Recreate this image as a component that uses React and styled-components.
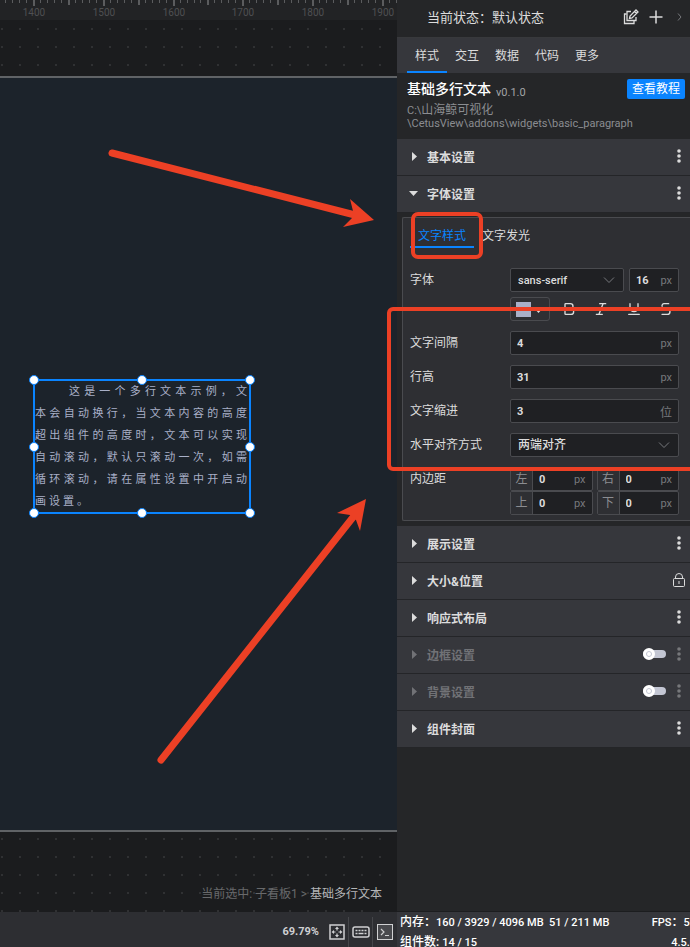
import React, { useState } from 'react';
import styled, { createGlobalStyle } from 'styled-components';
import { Bold, Italic, Underline, Strikethrough } from 'lucide-react';

const colors = {
  canvas: '#1b1c1e',
  board: '#1c232b',
  panel: '#252628',
  bar: '#36373c',
  group: '#2e2f33',
  field: '#1f2023',
  border: '#4a4b4f',
  text: '#dcdcdc',
  muted: '#8b8d91',
  accent: '#0a84ff',
  mark: '#ec4025',
};

const GlobalStyle = createGlobalStyle`
  *, *::before { box-sizing: border-box; }
  body {
    margin: 0;
    background: ${colors.panel};
    color: ${colors.text};
    font-family: Roboto, 'Noto Sans CJK SC', sans-serif;
    font-size: 12px;
  }
  button, input, select {
    margin: 0;
    padding: 0;
    border: 0;
    background: none;
    color: inherit;
    font: inherit;
  }
  svg { display: block; flex: none; }
`;

const Page = styled.div`
  position: relative;
  display: grid;
  grid-template-columns: minmax(0, 1fr) 293px;
  min-height: 100vh;
  overflow: hidden;
`;

/* Latin text and digits sit a size below the Chinese around them */
const Latin = styled.span`
  font-size: 11px;
  line-height: 1;
`;

/* ---- canvas side ---- */

const CanvasColumn = styled.main`
  display: flex;
  flex-direction: column;
  min-width: 0;
`;

const RulerBar = styled.div`
  height: 20px;
  overflow: hidden;
  background: #222325;
`;

const Stage = styled.div`
  flex: 1;
  display: flex;
  flex-direction: column;
  padding-top: 56px;
  background: conic-gradient(from 270deg at 2px 2px, #303133 90deg, transparent 0) 1px 8px / 18px 18px ${colors.canvas};
`;

const Board = styled.div`
  position: relative;
  flex: 1;
  border: solid #606366;
  border-width: 2px 0;
  background: ${colors.board};
`;

const Widget = styled.div`
  position: absolute;
  left: 34px;
  top: 302px;
  width: 216px;
  height: 133px;
  padding: 1px 0 0 1px;
`;

const Paragraph = styled.p`
  margin: 0;
  color: #a9b0c8;
  font-size: 11px;
  line-height: 22px;
  letter-spacing: 3px;
  text-indent: 34px;
  text-align: justify;
`;

const Selection = styled.div`
  position: absolute;
  inset: 0;
  box-shadow: 0 0 0 1px ${colors.accent}, inset 0 0 0 1px ${colors.accent};
`;

const Handle = styled.span`
  position: absolute;
  left: ${p => p.$x}%;
  top: ${p => p.$y}%;
  width: 10px;
  height: 10px;
  margin: -5px;
  border: 1px solid ${colors.accent};
  border-radius: 50%;
  background: #fff;
`;

const Crumbs = styled.div`
  display: flex;
  justify-content: flex-end;
  height: 80px;
  padding: 52px 15px 0 0;
  line-height: 20px;
  color: #68696b;
  white-space: pre;
`;

const Current = styled.span`color: #b4b5b7;`;

const ZoomBar = styled.div`
  display: flex;
  justify-content: flex-end;
  align-items: flex-end;
  height: 35px;
  padding-right: 1px;
  background: #2d2e32;
  font-size: 11px;
  font-weight: 700;
  color: #cfd0d2;
`;

const ZoomValue = styled.span`
  padding-right: 5px;
  line-height: 30px;
`;

const BarButton = styled.button`
  display: flex;
  align-items: center;
  justify-content: center;
  width: 24px;
  height: 30px;
  border-left: 1px solid ${p => p.$divided ? '#45464a' : 'transparent'};
`;

/* ---- settings side ---- */

const Panel = styled.aside`
  display: flex;
  flex-direction: column;
  min-width: 0;
  background: ${colors.panel};
`;

const StateBar = styled.header`
  display: flex;
  align-items: center;
  height: 38px;
  padding: 0 0 4px 30px;
  border-bottom: 1px solid #38393c;
  font-size: 13px;
`;

const StateName = styled.span`flex: 1;`;

const IconButton = styled.button`
  display: flex;
  align-items: center;
  justify-content: center;
  width: ${p => p.$width || 14}px;
  height: 24px;
  color: ${p => p.$dim ? '#77787b' : colors.text};
`;

const TabBar = styled.nav`
  display: flex;
  height: 35px;
  padding-left: 10px;
  background: ${colors.bar};
`;

const Tab = styled.button`
  padding: 0 8px;
  border-bottom: 2px solid ${p => p.$active ? colors.accent : 'transparent'};
`;

const Info = styled.section`
  height: 66px;
  padding: 5px 5px 0 10px;
`;

const InfoTop = styled.div`
  display: flex;
  align-items: center;
  height: 22px;
`;

const Title = styled.h1`
  margin: 0;
  font-size: 14px;
  font-weight: 500;
  line-height: 24px;
  color: #fff;
`;

const Version = styled.span`
  flex: 1;
  padding: 6px 0 0 5px;
  color: #a3a4a6;
  font-size: 11px;
`;

const Guide = styled.a`
  padding: 0 5px;
  border-radius: 2px;
  background: ${colors.accent};
  color: #fff;
  line-height: 20px;
  text-decoration: none;
`;

const Path = styled.p`
  margin: 4px 0 0;
  line-height: 13px;
  color: ${colors.muted};
`;

const SectionHead = styled.div`
  display: flex;
  align-items: center;
  height: 37px;
  padding: 0 4px 2px 0;
  border-bottom: 1px solid #242528;
  background: ${colors.bar};
  color: ${p => p.$dim ? '#717276' : colors.text};
`;

const SectionToggle = styled.button`
  flex: 1;
  display: flex;
  align-items: center;
  gap: 8px;
  height: 34px;
  padding-left: 12px;
  font-weight: 700;
  text-align: left;
`;

const Switch = styled.input`
  appearance: none;
  position: relative;
  width: 23px;
  height: 8px;
  margin-right: 6px;
  border-radius: 4px;
  background: #c3c6d3;

  &::before {
    content: '';
    position: absolute;
    left: ${p => p.checked ? 11 : 0}px;
    top: -2px;
    width: 12px;
    height: 12px;
    border: 3px solid #fff;
    border-radius: 50%;
    background: #fff;
    box-shadow: inset 0 0 0 1px #c3c6d3;
  }
`;

const SectionBody = styled.div`
  padding: 4px 0 5px 5px;
`;

const Group = styled.div`
  padding: 0 11px 5px 7px;
  border: 1px solid ${colors.border};
  border-right: 0;
  border-radius: 2px 0 0 2px;
  background: ${colors.group};
`;

const SubTabs = styled.div`
  display: flex;
  height: 30px;
  margin-bottom: 20px;
`;

const SubTab = styled(Tab)`
  padding: 4px 8px 0;
  color: ${p => p.$active ? colors.accent : colors.text};
`;

const Row = styled.div`
  display: grid;
  grid-template-columns: 100px minmax(0, 1fr);
  margin-bottom: ${p => p.$tight ? 5 : 10}px;

  &:last-child { margin-bottom: 0; }
`;

const RowLabel = styled.label`line-height: 24px;`;

const Controls = styled.div`
  display: flex;
  gap: 5px;
  grid-column: 2;
`;

const Box = styled.div`
  display: flex;
  align-items: center;
  flex: ${p => p.$narrow ? '0 0 50px' : '1'};
  min-width: 0;
  height: 24px;
  padding-right: 6px;
  border: 1px solid ${colors.border};
  border-radius: 2px;
  background: ${colors.field};
`;

const TextInput = styled.input`
  flex: 1;
  min-width: 0;
  padding: 1px 0 0 6px;
  font-size: 11px;
  font-weight: 700;
  outline: 0;
`;

const Unit = styled.span`
  color: #77797d;
  font-size: ${p => p.$latin ? 11 : 12}px;
`;

const Select = styled.select`
  flex: 1;
  min-width: 0;
  appearance: none;
  padding-left: 7px;
  font-size: ${p => p.$latin ? 11 : 12}px;
  font-weight: 500;
  outline: 0;
`;

const Swatch = styled.button`
  display: flex;
  align-items: center;
  gap: 3px;
  width: 40px;
  height: 24px;
  padding-left: 5px;
  border: 1px solid ${colors.border};
  border-radius: 3px;
`;

const SwatchColor = styled.span`
  width: 15px;
  height: 15px;
  background: #a9b0c8;
`;

const StyleButtons = styled.div`
  flex: 1;
  display: flex;
  justify-content: space-between;
  align-items: center;
  padding: 0 6px 0 7px;
`;

const SideGrid = styled.div`
  display: grid;
  grid-template-columns: 1fr 1fr;
  column-gap: 4px;
`;

const SideLabel = styled.label`
  width: 22px;
  height: 22px;
  border-right: 1px solid ${colors.border};
  background: ${colors.group};
  color: ${colors.muted};
  line-height: 22px;
  text-align: center;
`;

const Stats = styled.footer`
  display: grid;
  grid-template-columns: 1fr auto;
  grid-auto-rows: 20px;
  align-content: start;
  height: 36px;
  margin-top: auto;
  padding-left: 3px;
  border-top: 1px solid #1c1d1f;
  background: ${colors.bar};
  color: #fff;
  font-weight: 500;
  line-height: 20px;
  white-space: pre;
  overflow: hidden;
`;

const StatEnd = styled.span`
  margin-right: -6px;
  text-align: right;
`;

const Marks = styled.svg`
  position: absolute;
  left: 0;
  top: 0;
  pointer-events: none;
`;

const unit = 69.79;

const Ruler = () => {
  const ticks = [];
  for (let i = -4; i < 56; i++) {
    const big = i % 10 === 0;
    const mid = !big && i % 5 === 0;
    ticks.push(
      <rect key={i} x={Math.round(33 + i * unit / 10)} y="0"
            width={big || mid ? 2 : 1} height={big ? 6 : mid ? 5 : 3} />
    );
  }
  return (
    <RulerBar>
      <svg width="420" height="20" fill="#5b5c5e" fontSize="10" textAnchor="middle">
        {ticks}
        {[1400, 1500, 1600, 1700, 1800, 1900].map((n, i) =>
          <text key={n} x={Math.round(34 + i * unit)} y="16" fill="#4f5052">{n}</text>
        )}
      </svg>
    </RulerBar>
  );
};

const Caret = ({ open }) => (
  <svg width="10" height="10" fill="currentColor">
    {open ? <path d="M0 3h9l-4.500 5z" /> : <path d="M3 1l5 4.500L3 10z" />}
  </svg>
);

const Chevron = () => (
  <svg width="14" height="8" fill="none" stroke="#77797d">
    <path d="M1 1.500l5 5 5-5" />
  </svg>
);

const Dots = () => (
  <svg width="4" height="14" fill="currentColor">
    <circle cx="2" cy="2" r="1.800" />
    <circle cx="2" cy="7" r="1.800" />
    <circle cx="2" cy="12" r="1.800" />
  </svg>
);

const Lock = () => (
  <svg width="14" height="16" fill="none" stroke="currentColor">
    <rect x="1.500" y="6.500" width="11" height="8" rx="1" />
    <path d="M3.500 6.500V5a3.500 3.500 0 0 1 7 0v1.500M7 9v3" />
  </svg>
);

const Section = ({ title, dim, lock, toggle, children }) => {
  const [open, setOpen] = useState(!!children);
  const [on, setOn] = useState(false);

  return (
    <section>
      <SectionHead $dim={dim}>
        <SectionToggle aria-expanded={open} onClick={() => setOpen(!open)}>
          <Caret open={open} />
          {title}
        </SectionToggle>
        {toggle &&
          <Switch type="checkbox" role="switch" aria-label={title}
                  checked={on} onChange={() => setOn(!on)} />
        }
        <IconButton $dim={dim} aria-label={lock ? '锁定' : '菜单'}>
          {lock ? <Lock /> : <Dots />}
        </IconButton>
      </SectionHead>
      {open && children && <SectionBody>{children}</SectionBody>}
    </section>
  );
};

const NumberRow = ({ id, label, value, unit: suffix }) => (
  <Row>
    <RowLabel htmlFor={id}>{label}</RowLabel>
    <Box>
      <TextInput id={id} defaultValue={value} />
      <Unit $latin={suffix === 'px'}>{suffix}</Unit>
    </Box>
  </Row>
);

const SideField = ({ id, label }) => (
  <Box>
    <SideLabel htmlFor={id}>{label}</SideLabel>
    <TextInput id={id} defaultValue="0" />
    <Unit $latin>px</Unit>
  </Box>
);

const FontSettings = () => {
  const [tab, setTab] = useState('文字样式');

  return (
    <Group>
      <SubTabs>
        {['文字样式', '文字发光'].map(name =>
          <SubTab key={name} $active={tab === name} onClick={() => setTab(name)}>{name}</SubTab>
        )}
      </SubTabs>

      <Row $tight>
        <RowLabel htmlFor="font">字体</RowLabel>
        <Controls>
          <Box>
            <Select $latin id="font"><option>sans-serif</option><option>serif</option></Select>
            <Chevron />
          </Box>
          <Box $narrow>
            <TextInput aria-label="字号" defaultValue="16" />
            <Unit $latin>px</Unit>
          </Box>
        </Controls>
      </Row>

      <Row>
        <Controls>
          <Swatch aria-label="颜色">
            <SwatchColor />
            <svg width="9" height="8" fill="currentColor"><path d="M0 3h9L4.500 8z" /></svg>
          </Swatch>
          <StyleButtons>
            <IconButton aria-label="加粗"><Bold size={16} /></IconButton>
            <IconButton aria-label="斜体"><Italic size={16} /></IconButton>
            <IconButton aria-label="下划线"><Underline size={16} /></IconButton>
            <IconButton aria-label="删除线"><Strikethrough size={16} /></IconButton>
          </StyleButtons>
        </Controls>
      </Row>

      <NumberRow id="spacing" label="文字间隔" value="4" unit="px" />
      <NumberRow id="leading" label="行高" value="31" unit="px" />
      <NumberRow id="indent" label="文字缩进" value="3" unit="位" />

      <Row>
        <RowLabel htmlFor="align">水平对齐方式</RowLabel>
        <Box>
          <Select id="align"><option>两端对齐</option><option>左对齐</option></Select>
          <Chevron />
        </Box>
      </Row>

      <Row>
        <RowLabel htmlFor="pad-left">内边距</RowLabel>
        <SideGrid>
          <SideField id="pad-left" label="左" />
          <SideField id="pad-right" label="右" />
          <SideField id="pad-top" label="上" />
          <SideField id="pad-bottom" label="下" />
        </SideGrid>
      </Row>
    </Group>
  );
};

const handles = [[0, 0], [50, 0], [100, 0], [0, 50], [100, 50], [0, 100], [50, 100], [100, 100]];

const Canvas = () => (
  <CanvasColumn>
    <Ruler />
    <Stage>
      <Board>
        <Widget>
          <Paragraph>
            这是一个多行文本示例，文本会自动换行，当文本内容的高度超出组件的高度时，文本可以实现自动滚动，默认只滚动一次，如需循环滚动，请在属性设置中开启动画设置。
          </Paragraph>
          <Selection>
            {handles.map(([x, y]) => <Handle key={x + '-' + y} $x={x} $y={y} />)}
          </Selection>
        </Widget>
      </Board>
      <Crumbs>当前选中: 子看板1 &gt; <Current>基础多行文本</Current></Crumbs>
    </Stage>
    <ZoomBar>
      <ZoomValue>69.79%</ZoomValue>
      <BarButton aria-label="适应画布">
        <svg width="16" height="16" fill="none" stroke="currentColor">
          <rect x="1" y="1" width="14" height="14" strokeWidth="1.500" />
          <path d="M8 4v2.500M8 9.500V12M4 8h2.500M9.500 8H12" strokeWidth="1.200" />
          <path d="M6 5L8 2.500 10 5zM6 11l2 2.500 2-2.500zM5 6L2.500 8 5 10zM11 6l2.500 2-2.500 2z"
                fill="currentColor" stroke="none" />
        </svg>
      </BarButton>
      <BarButton $divided aria-label="快捷键">
        <svg width="18" height="12" fill="none" stroke="currentColor" strokeWidth="1.500">
          <rect x="1" y="1" width="16" height="10" rx="2" />
          <path d="M3.500 4.500h11" strokeDasharray="2 1" />
          <path d="M3.500 7.500h2M6.500 7.500h5M12.500 7.500h2" />
        </svg>
      </BarButton>
      <BarButton $divided aria-label="控制台">
        <svg width="16" height="16" fill="none" stroke="currentColor">
          <rect x=".5" y=".5" width="15" height="15" fill="#48494d" />
          <path d="M4 5l3 3-3 3M8 11.500h4" strokeWidth="1.200" />
        </svg>
      </BarButton>
    </ZoomBar>
  </CanvasColumn>
);

const App = () => {
  const [tab, setTab] = useState('样式');

  return (
    <Page>
      <GlobalStyle />
      <Canvas />

      <Panel>
        <StateBar>
          <StateName>当前状态：默认状态</StateName>
          <IconButton $width={25} aria-label="编辑">
            <svg width="16" height="16" fill="none" stroke="currentColor" strokeWidth="1.300">
              <path d="M8 2.500H4v9h9V8" />
              <path d="M3.500 5H1.500v9.500H11V12" />
              <path d="M6.500 9.500l.5-2.500 6-6 2 2-6 6zM11.500 2.500l2 2" />
            </svg>
          </IconButton>
          <IconButton $width={25} aria-label="添加">
            <svg width="14" height="14" stroke="currentColor" strokeWidth="1.500">
              <path d="M7 .5v13M.5 7h13" />
            </svg>
          </IconButton>
          <IconButton $width={22} $dim aria-label="下一个">
            <svg width="5" height="8" fill="none" stroke="currentColor">
              <path d="M1 .5L4 4 1 7.500" />
            </svg>
          </IconButton>
        </StateBar>

        <TabBar>
          {['样式', '交互', '数据', '代码', '更多'].map(name =>
            <Tab key={name} $active={tab === name} onClick={() => setTab(name)}>{name}</Tab>
          )}
        </TabBar>

        <Info>
          <InfoTop>
            <Title>基础多行文本</Title>
            <Version>v0.1.0</Version>
            <Guide href="#guide">查看教程</Guide>
          </InfoTop>
          <Path>
            <Latin>C:\</Latin>山海鲸可视化<br />
            <Latin>\CetusView\addons\widgets\basic_paragraph</Latin>
          </Path>
        </Info>

        <Section title="基本设置" />
        <Section title="字体设置"><FontSettings /></Section>
        <Section title="展示设置" />
        <Section title="大小&amp;位置" lock />
        <Section title="响应式布局" />
        <Section title="边框设置" dim toggle />
        <Section title="背景设置" dim toggle />
        <Section title="组件封面" />

        <Stats>
          <span>内存：<Latin>160 / 3929 / 4096 MB  51 / 211 MB</Latin></span>
          <StatEnd><Latin>FPS</Latin>：<Latin>59</Latin></StatEnd>
          <span>组件数: <Latin>14 / 15</Latin></span>
          <StatEnd><Latin>4.5.0</Latin></StatEnd>
        </Stats>
      </Panel>

      <Marks width="690" height="947" fill={colors.mark} stroke="none">
        <g fill="none" stroke={colors.mark} strokeWidth="4">
          <rect x="413" y="214" width="68" height="43" rx="5" />
          <rect x="389" y="309" width="320" height="160" rx="4" />
        </g>
        <g stroke={colors.mark} strokeWidth="7" strokeLinecap="round">
          <path d="M112 153L355 215" />
          <path d="M161 760L354 516" />
        </g>
        <path d="M374 220L350 199l3 12-1 7-9 9z" />
        <path d="M366 499l-29 14 13 2 6 5 4 11z" />
      </Marks>
    </Page>
  );
};

export default App;
